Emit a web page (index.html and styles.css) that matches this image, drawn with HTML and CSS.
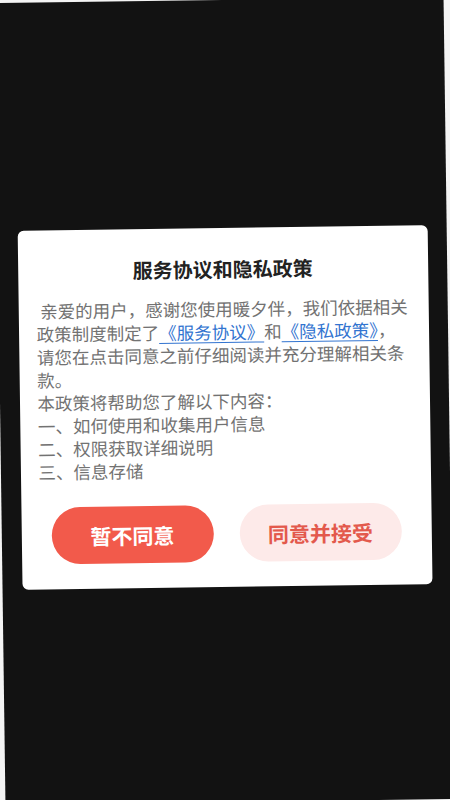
FILE: index.html
```html
<!DOCTYPE html>
<html>
<head>
	<meta charset="utf-8">
	<title>服务协议和隐私政策</title>
	<link rel="stylesheet" href="styles.css">
</head>
<body>
	<div class="screen">
		<div class="dialog">
			<h2 class="title">服务协议和隐私政策</h2>
			<div class="content">
				<p class="intro">&nbsp;亲爱的用户，感谢您使用暖夕伴，我们依据相关政策制度制定了<a href="#" class="link">《服务协议》</a>和<a href="#" class="link">《隐私政策》</a>，请您在点击同意之前仔细阅读并充分理解相关条款。</p>
				<p>本政策将帮助您了解以下内容：</p>
				<p>一、如何使用和收集用户信息</p>
				<p>二、权限获取详细说明</p>
				<p>三、信息存储</p>
			</div>
			<div class="actions">
				<button class="btn btn-reject">暂不同意</button>
				<button class="btn btn-accept">同意并接受</button>
			</div>
		</div>
	</div>
</body>
</html>
```

FILE: styles.css
```css
body {
	margin: 0;
	background-color: #f4f4f4;
	font-family: "Noto Sans CJK SC", "Noto Sans", sans-serif;
	overflow: hidden;
}

.screen {
	width: 449px;
	height: 802px;
	margin-left: 0;
	padding-top: 228px;
	box-sizing: border-box;
	background-color: #121212;
	transform: rotate(-0.78deg);
}

.dialog {
	width: 410px;
	margin: 0 auto;
	padding: 27px 18px 25px;
	box-sizing: border-box;
	background-color: #fff;
	border-radius: 6px;
}

.title {
	margin: 0 0 14px;
	font-size: 20px;
	line-height: 28px;
	font-weight: bold;
	color: #222;
	text-align: center;
}

.content {
	font-size: 17.5px;
	line-height: 23px;
	color: #727272;
}

.content p {
	margin: 0;
}

.link {
	color: #3274d0;
	text-decoration: underline;
	text-underline-offset: 3px;
}

.actions {
	display: flex;
	gap: 26px;
	padding: 0 12px;
	margin-top: 24px;
}

.btn {
	flex: 1;
	height: 57px;
	border: none;
	border-radius: 29px;
	font-family: inherit;
	font-size: 21px;
	font-weight: bold;
	cursor: pointer;
}

.btn-reject {
	background-color: #f25a4b;
	color: #fff;
}

.btn-accept {
	background-color: #fdeae9;
	color: #e3594c;
}
```
